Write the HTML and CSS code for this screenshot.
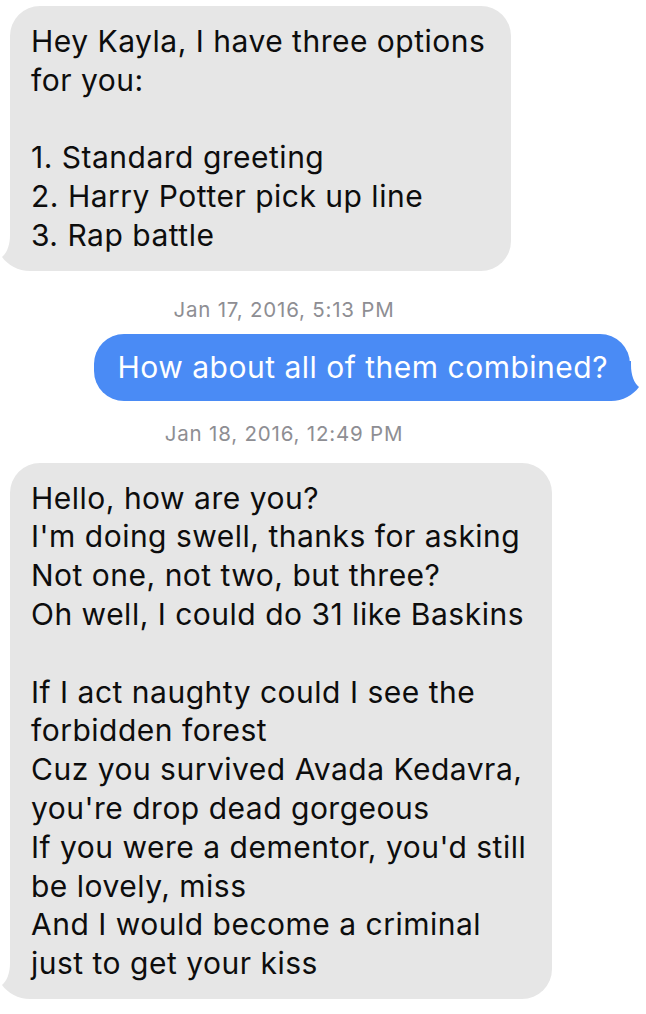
FILE: index.html
```html
<!DOCTYPE html>
<html lang="en">
<head>
  <meta charset="UTF-8">
  <title>Messages</title>
  <link rel="stylesheet" href="styles.css">
</head>
<body>
  <div class="thread">
    <div class="msg them">
      Hey Kayla, I have three options<br>
      for you:<br>
      <br>
      1. Standard greeting<br>
      2. Harry Potter pick up line<br>
      3. Rap battle
      <svg class="tail" viewBox="0 0 40 40"><path d="M8 0 L40 0 L40 40 L28 40 C16 40 6 34 0 26 C5 22 8 14 8 4 Z"/></svg>
    </div>

    <div class="stamp stamp-a">Jan 17, 2016, 5:13 PM</div>

    <div class="msg me">
      How about all of them combined?
      <svg class="tail" viewBox="0 0 40 40"><path d="M8 0 L40 0 L40 40 L28 40 C16 40 6 34 0 26 C5 22 8 14 8 4 Z"/></svg>
    </div>

    <div class="stamp stamp-b">Jan 18, 2016, 12:49 PM</div>

    <div class="msg them">
      Hello, how are you?<br>
      I'm doing swell, thanks for asking<br>
      Not one, not two, but three?<br>
      Oh well, I could do 31 like Baskins<br>
      <br>
      If I act naughty could I see the<br>
      forbidden forest<br>
      Cuz you survived Avada Kedavra,<br>
      you're drop dead gorgeous<br>
      If you were a dementor, you'd still<br>
      be lovely, miss<br>
      And I would become a criminal<br>
      just to get your kiss
      <svg class="tail" viewBox="0 0 40 40"><path d="M8 0 L40 0 L40 40 L28 40 C16 40 6 34 0 26 C5 22 8 14 8 4 Z"/></svg>
    </div>
  </div>
</body>
</html>
```

FILE: styles.css
```css
body {
  margin: 0;
  background: #fff;
  font-family: 'Inter', 'Helvetica Neue', sans-serif;
  color: #0d0d0d;
}
.thread {
  display: flex;
  flex-direction: column;
  padding: 6px 6px 0 10px;
}
.msg {
  position: relative;
  isolation: isolate;
  width: fit-content;
  font-size: 30px;
  line-height: 38.8px;
  letter-spacing: 0.5px;
  border-radius: 30px;
}
.them {
  background: #e6e6e6;
  padding: 16px 26px 16px 21px;
}
.me {
  align-self: flex-end;
  margin-right: 10px;
  background: #4a8bf5;
  color: #fff;
  padding: 14px 22px 14px 24px;
}

/* bubble tail, painted under the text */
.tail {
  position: absolute;
  z-index: -1;
  bottom: 0;
  width: 40px;
  height: 40px;
}
.them .tail {
  left: -8px;
  fill: #e6e6e6;
}
.me .tail {
  right: -9px;
  fill: #4a8bf5;
  transform: scaleX(-1);
}

.stamp {
  font-size: 20.5px;
  line-height: 26px;
  letter-spacing: 0.8px;
  color: #8e8e93;
  text-align: center;
  padding-right: 82px;
}
.stamp-a {
  margin: 26px 0 11px;
}
.stamp-b {
  margin: 20px 0 16px;
}
```
